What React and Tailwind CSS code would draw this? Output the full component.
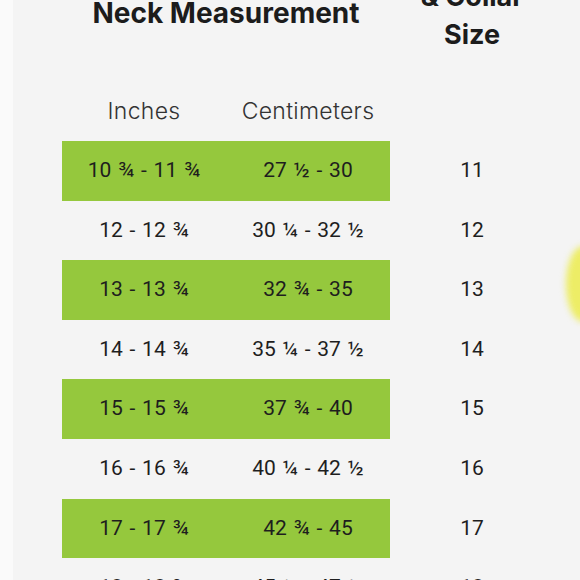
import React from 'react'

const rows = [
    { inches: '10 ¾ - 11 ¾', cm: '27 ½ - 30', size: '11' },
    { inches: '12 - 12 ¾', cm: '30 ¼ - 32 ½', size: '12' },
    { inches: '13 - 13 ¾', cm: '32 ¾ - 35', size: '13' },
    { inches: '14 - 14 ¾', cm: '35 ¼ - 37 ½', size: '14' },
    { inches: '15 - 15 ¾', cm: '37 ¾ - 40', size: '15' },
    { inches: '16 - 16 ¾', cm: '40 ¼ - 42 ½', size: '16' },
    { inches: '17 - 17 ¾', cm: '42 ¾ - 45', size: '17' },
    { inches: '18 - 18 ¾', cm: '45 ¼ - 47 ½', size: '18' },
]

const App = () => {
    return (
        <div className="relative w-[580px] h-[580px] overflow-hidden bg-[#f4f4f4] flex">
            {/* left paper edge */}
            <div className="w-[13px] shrink-0 bg-[#fafafa]"></div>

            <div className="pl-[49px] flex flex-col">
                {/* Titles */}
                <div className="h-[84px] shrink-0 grid grid-cols-[328px_164px] font-['Inter',sans-serif] font-bold text-[#1c1c1c]">
                    <div className="text-center text-[28px] leading-[30px] mt-[-2px]">
                        Neck Measurement
                    </div>
                    <div className="text-center text-[27px] leading-[38px] mt-[-22px]">
                        <div>&amp; Collar</div>
                        <div>Size</div>
                    </div>
                </div>

                {/* Column headers */}
                <div className="h-[57px] shrink-0 grid grid-cols-[164px_164px_164px] items-center pb-[2px] font-['Inter',sans-serif] font-light text-[23px] tracking-[0.3px] text-[#333]">
                    <div className="text-center">Inches</div>
                    <div className="text-center">Centimeters</div>
                    <div></div>
                </div>

                {/* Rows */}
                {rows.map((row, i) => (
                    <div
                        key={row.size}
                        className="h-[59.6px] shrink-0 grid grid-cols-[164px_164px_164px] items-center font-['Roboto',sans-serif] text-[21px] [word-spacing:1.5px] text-[#1e1e1e]"
                    >
                        <div className={`h-full col-span-2 grid grid-cols-2 items-center ${i % 2 === 0 ? 'bg-[#95c83d]' : ''}`}>
                            <div className="text-center">{row.inches}</div>
                            <div className="text-center">{row.cm}</div>
                        </div>
                        <div className="text-center">{row.size}</div>
                    </div>
                ))}
            </div>

            {/* yellow smudge at the edge */}
            <div className="absolute left-[566px] top-[246px] w-[34px] h-[76px] rounded-[50%] bg-[#eded66] blur-[3px]"></div>
        </div>
    )
}

export default App
